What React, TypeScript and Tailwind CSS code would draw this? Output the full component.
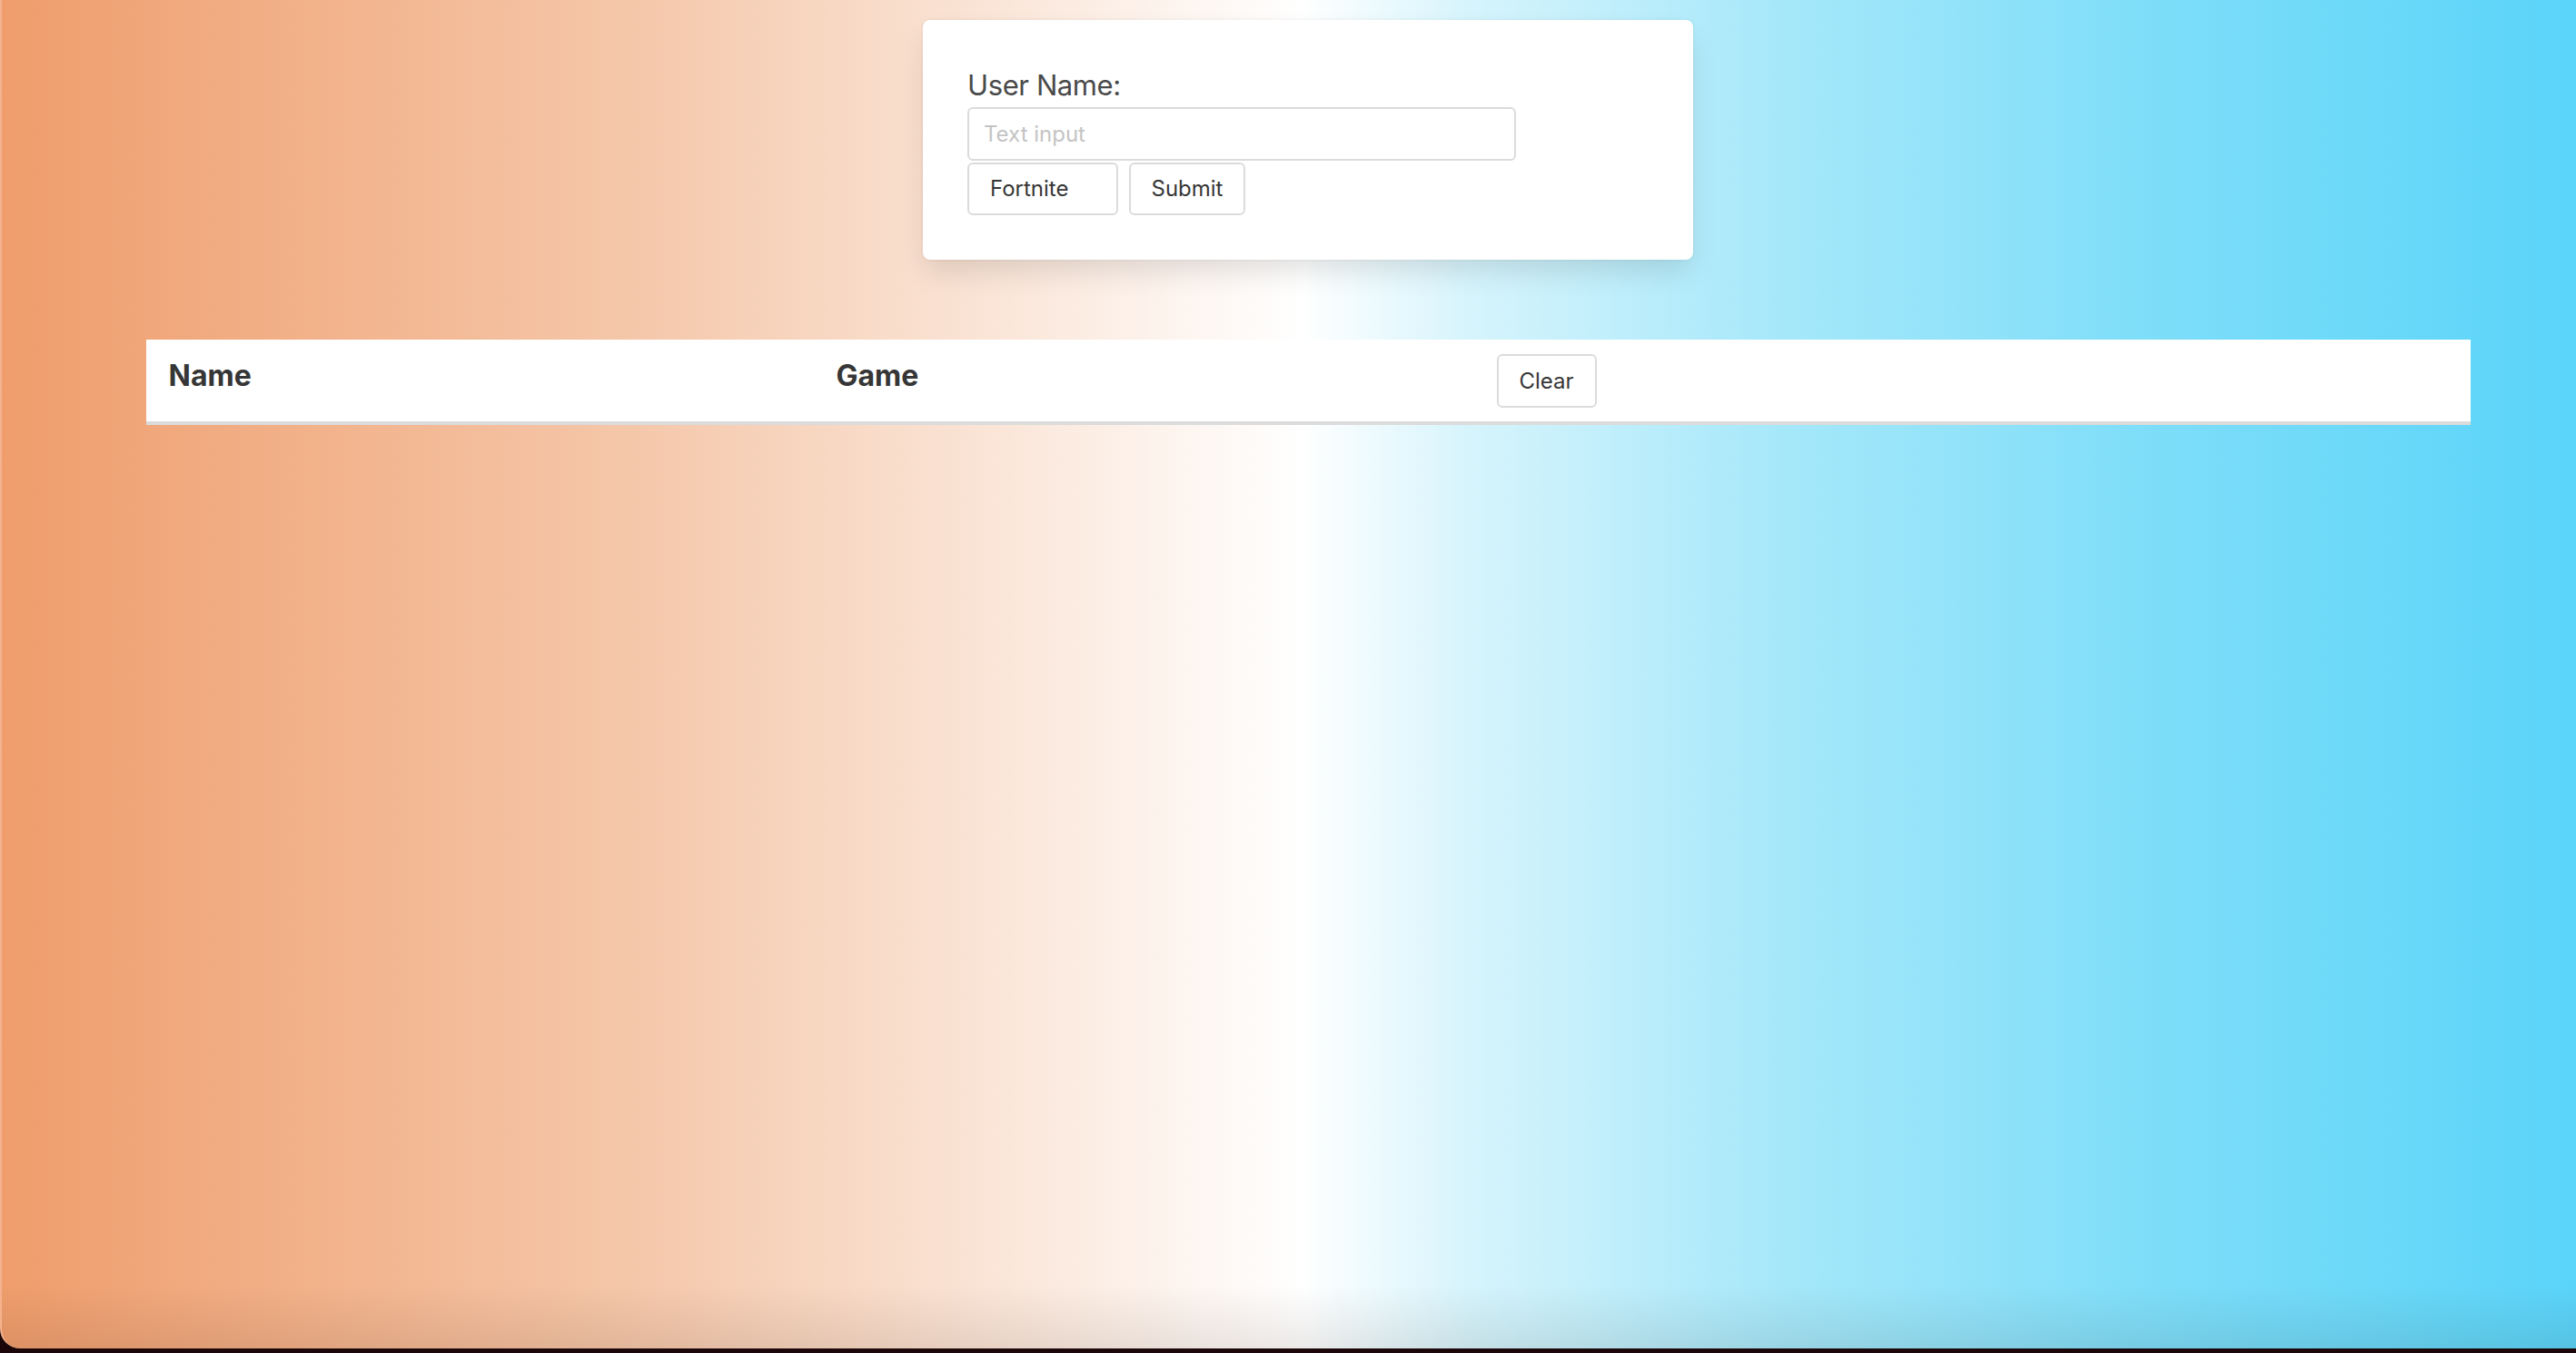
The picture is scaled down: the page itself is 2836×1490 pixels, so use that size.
import React from "react";

const players: { name: string; game: string }[] = [];

export default function App() {
  return (
    <div className="h-screen bg-[#1b0609] flex flex-col font-['Inter',sans-serif] text-[#363636]">
      <div className="flex-1 rounded-bl-[22px] border-l-2 border-[#f4b38e] bg-[linear-gradient(to_bottom,transparent_calc(100%-70px),rgba(40,20,10,0.09)),linear-gradient(to_right,#ef9d6c,#f5c8ab_25%,#ffffff_50.5%,#d6f4fc_57%,#a6e8fa_69%,#7fdef9_83%,#5ad4f9)] pl-[42px] flex flex-col items-center overflow-hidden">

        {/* form card */}
        <div className="mt-[22px] w-[848px] bg-white rounded-[8px] pt-[48px] pb-[49px] px-[49px] shadow-[0_16px_32px_-4px_rgba(10,10,10,0.12),0_0_0_2px_rgba(10,10,10,0.02)]">
          <label className="block text-[31px] tracking-[-0.4px] leading-[48px] text-[#4a4a4a]">User Name:</label>
          <input
            type="text"
            placeholder="Text input"
            className="block w-[604px] h-[59px] border-2 border-[#dbdbdb] rounded-[6px] px-[16px] text-[24px] text-[#363636] placeholder:text-[#c4c4c4] outline-none"
          />
          <div className="mt-[2px] flex gap-[12px]">
            <div className="w-[166px] h-[58px] border-2 border-[#dbdbdb] rounded-[6px] pl-[23px] flex items-center text-[24px]">Fortnite</div>
            <button className="w-[128px] h-[58px] border-2 border-[#dbdbdb] rounded-[6px] flex items-center justify-center text-[24px] bg-white">Submit</button>
          </div>
        </div>

        {/* players table */}
        <div className="mt-[88px] w-[2559px] bg-white">
          <div className="grid grid-cols-[735px_726px_1fr] border-b-4 border-[#dbdbdb]">
            <div className="pt-[16px] pb-[16px] pl-[25px] text-[32px] leading-[48px] font-bold">Name</div>
            <div className="pt-[16px] pb-[16px] pl-[25px] text-[32px] leading-[48px] font-bold">Game</div>
            <div className="pt-[16px] pb-[15px] pl-[26px]">
              <button className="w-[110px] h-[59px] border-2 border-[#dbdbdb] rounded-[6px] flex items-center justify-center text-[24px] bg-white">Clear</button>
            </div>
          </div>
          {players.map((p, i) => (
            <div key={i} className="grid grid-cols-[735px_726px_1fr]">
              <div className="py-[16px] pl-[26px] text-[28px]">{p.name}</div>
              <div className="py-[16px] pl-[26px] text-[28px]">{p.game}</div>
              <div />
            </div>
          ))}
        </div>
      </div>
      <div className="h-[5px]" />
    </div>
  );
}
